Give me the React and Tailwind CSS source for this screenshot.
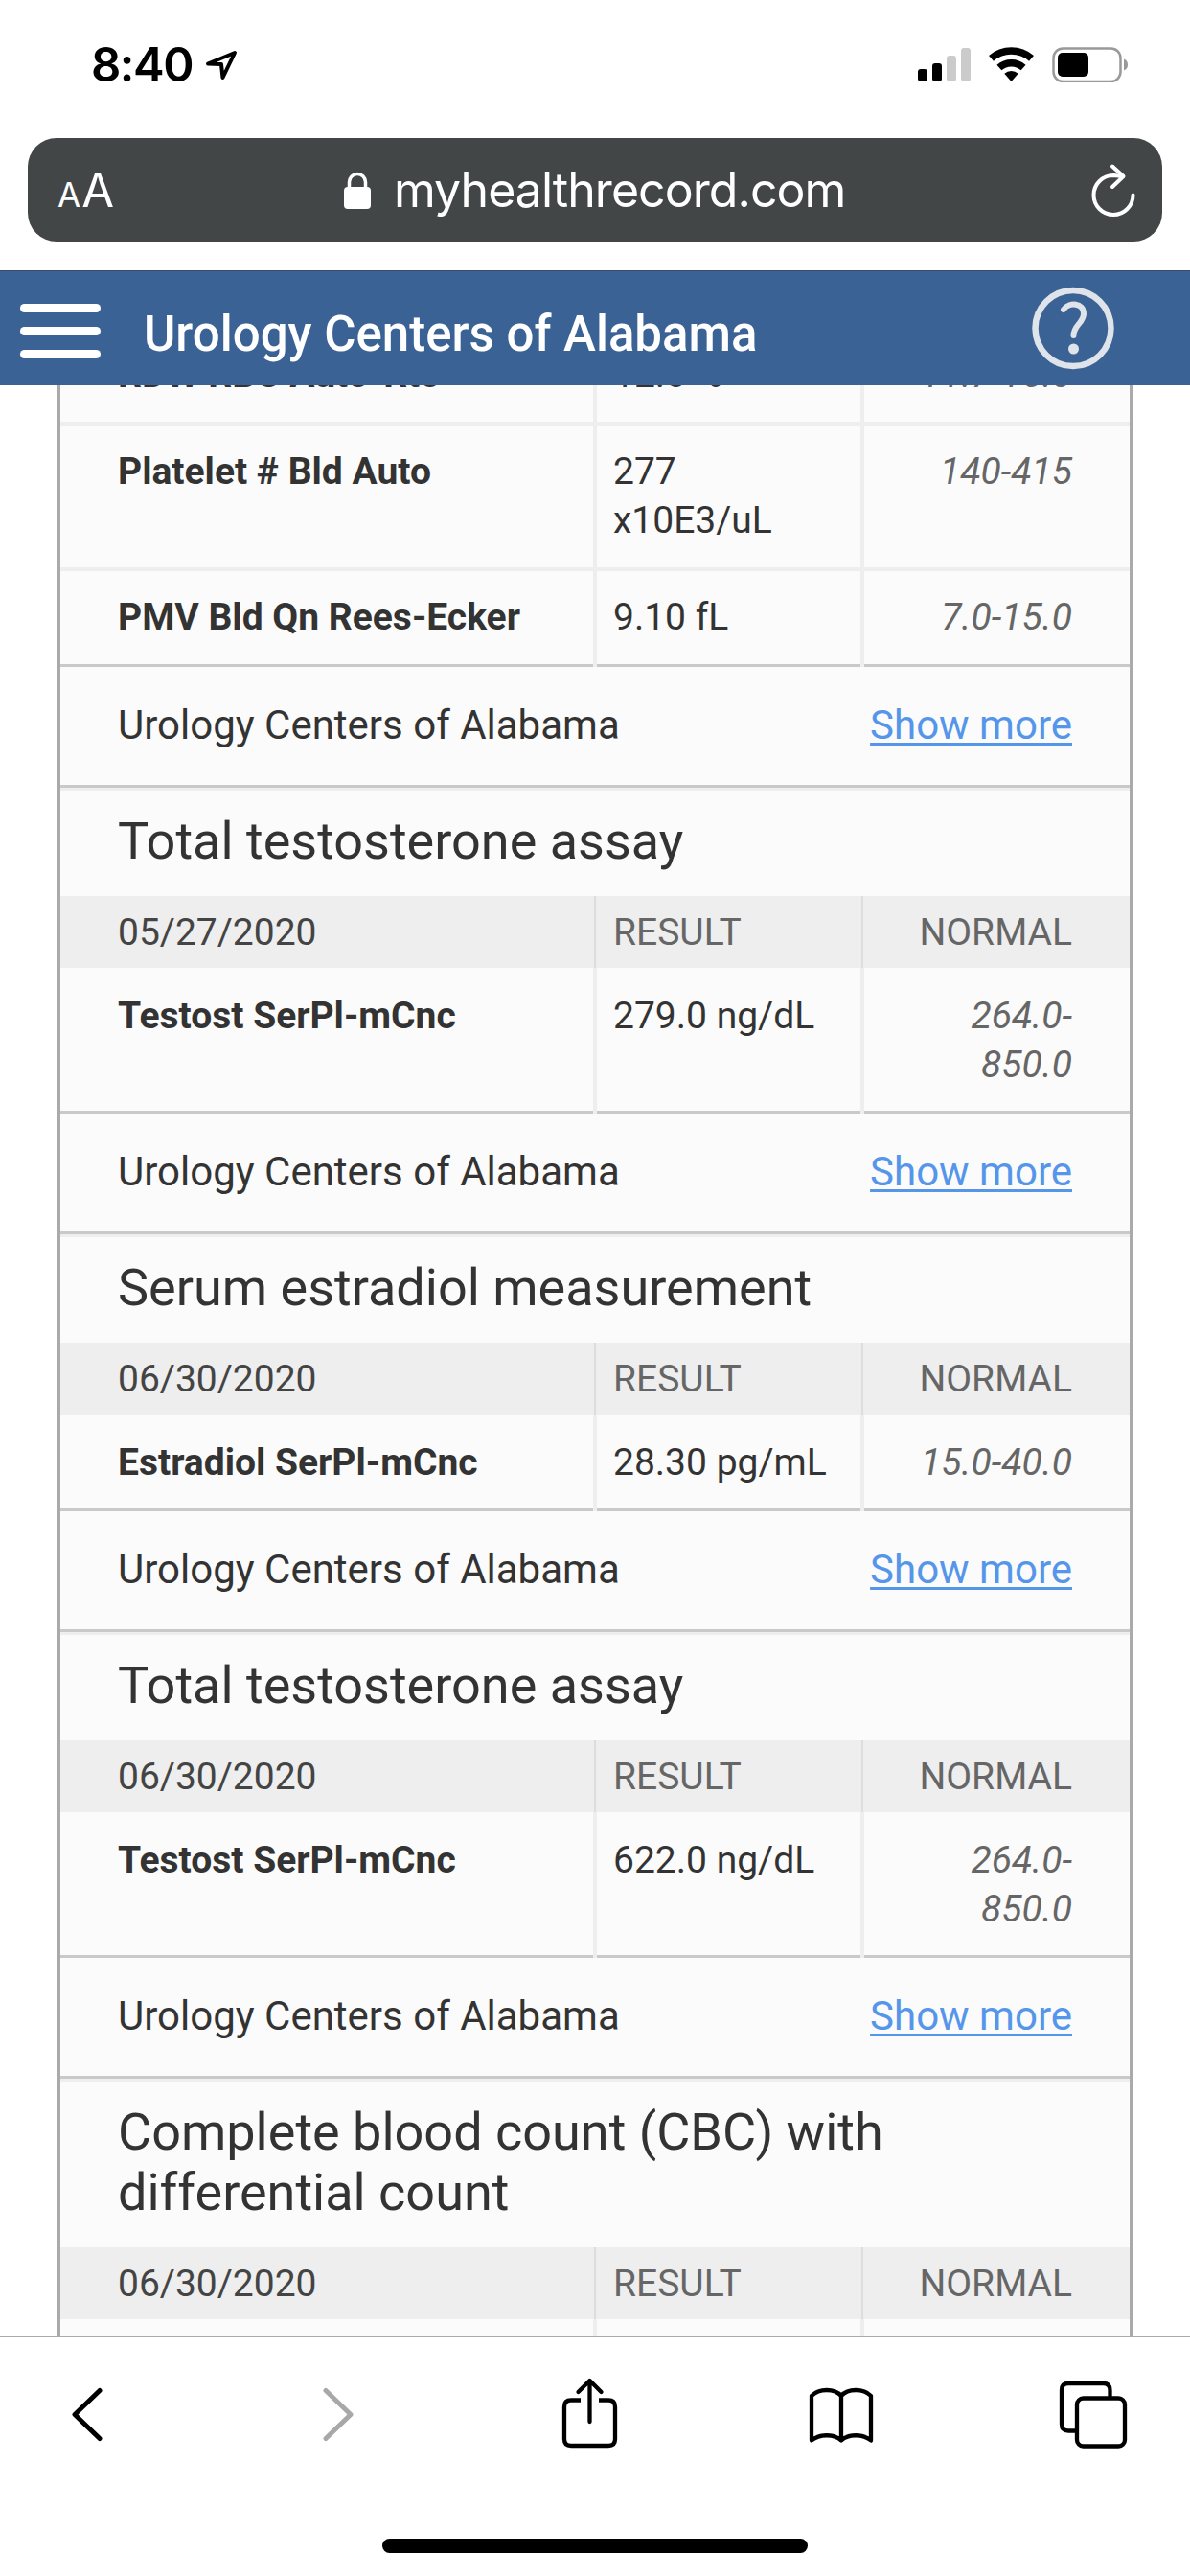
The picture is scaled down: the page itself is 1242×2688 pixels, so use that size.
const clinic = "Urology Centers of Alabama";

const reports = [
  {
    source: clinic,
    rows: [
      { name: "RDW RBC Auto-Rto", result: "12.6 %", normal: "11.7-15.0" },
      { name: "Platelet # Bld Auto", result: "277 x10E3/uL", normal: "140-415" },
      { name: "PMV Bld Qn Rees-Ecker", result: "9.10 fL", normal: "7.0-15.0" },
    ],
  },
  {
    title: "Total testosterone assay",
    date: "05/27/2020",
    source: clinic,
    rows: [
      { name: "Testost SerPl-mCnc", result: "279.0 ng/dL", normal: "264.0-850.0" },
    ],
  },
  {
    title: "Serum estradiol measurement",
    date: "06/30/2020",
    source: clinic,
    rows: [
      { name: "Estradiol SerPl-mCnc", result: "28.30 pg/mL", normal: "15.0-40.0" },
    ],
  },
  {
    title: "Total testosterone assay",
    date: "06/30/2020",
    source: clinic,
    rows: [
      { name: "Testost SerPl-mCnc", result: "622.0 ng/dL", normal: "264.0-850.0" },
    ],
  },
  {
    title: "Complete blood count (CBC) with differential count",
    date: "06/30/2020",
    rows: [{ name: "", result: "", normal: "" }],
  },
];

function StatusBar() {
  return (
    <div className="flex h-[144px] items-start justify-between pt-[37px] pr-[65px] pl-[95px]">
      <div className="flex items-center">
        <span className="w-[119px] text-[49px] leading-[62px] font-semibold tracking-[-1.5px]">
          8:40
        </span>
        <svg
          className="h-[32px] w-[34px]"
          viewBox="0 0 34 32"
          fill="none"
          stroke="black"
          strokeWidth="4"
          strokeLinejoin="round"
        >
          <path d="M31 3 L3 14.500 L17 15 L18.500 29 Z" />
        </svg>
      </div>
      <svg className="mt-[11px] h-[38px] w-[219px]" viewBox="0 0 219 38">
        <rect x="0" y="24" width="10" height="13" rx="3" />
        <rect x="15" y="18" width="10" height="19" rx="3" />
        <rect x="30" y="10" width="10" height="27" rx="3" fill="#cbcbcb" />
        <rect x="45" y="2" width="10" height="35" rx="3" fill="#cbcbcb" />
        <g fill="none" stroke="black" strokeWidth="7.5">
          <path d="M76.500 12.900 A32 32 0 0 1 118.500 12.900" />
          <path d="M84.900 22.500 A19.200 19.200 0 0 1 110.100 22.500" />
        </g>
        <path d="M97.500 37 L90.300 28.700 A11 11 0 0 1 104.700 28.700 Z" />
        <rect
          x="141.5"
          y="2.5"
          width="70"
          height="34.5"
          rx="10"
          fill="none"
          stroke="#999"
          strokeWidth="2.5"
        />
        <rect x="146" y="7" width="32" height="25" rx="5" />
        <path
          d="M215 13.500 Q219 15 219 19.500 Q219 24 215 25.500 Z"
          fill="#999"
        />
      </svg>
    </div>
  );
}

function AddressBar() {
  return (
    <div className="mx-[29px] flex h-[108px] items-center rounded-[30px] bg-[#424647] pr-[28px] pl-[31px] text-white">
      <div className="mt-[5px] flex w-[299px] items-baseline gap-px leading-[60px]">
        <span className="text-[35px]">A</span>
        <span className="text-[49px]">A</span>
      </div>
      <svg className="mr-[24px] h-[39px] w-[28px]" viewBox="0 0 28 39">
        <rect x="0" y="16" width="28" height="23" rx="4" fill="white" />
        <path
          d="M5.500 18 V11 A8.500 8.500 0 0 1 22.500 11 V18"
          fill="none"
          stroke="white"
          strokeWidth="3.5"
        />
      </svg>
      <span className="flex-1 text-[50px] leading-[60px] tracking-[-0.95px] whitespace-nowrap">
        myhealthrecord.com
      </span>
      <svg
        className="h-[56px] w-[46px]"
        viewBox="0 0 46 56"
        fill="none"
        stroke="white"
        strokeWidth="4"
        strokeLinecap="round"
        strokeLinejoin="round"
      >
        <path d="M43.500 33.500 A20.500 20.500 0 1 1 23 13 L33 14" />
        <path d="M22 3.500 L33.500 14 L22 25" />
      </svg>
    </div>
  );
}

function SiteHeader() {
  return (
    <header className="mt-[30px] flex h-[120px] shrink-0 items-center border-t border-[#3c4964] bg-[#3b6295] pr-[78px] pl-[21px] text-white">
      <div className="mt-[6px] flex w-[84px] flex-col gap-[15px]">
        <div className="h-[9px] rounded-full bg-white" />
        <div className="h-[9px] rounded-full bg-white" />
        <div className="h-[9px] rounded-full bg-white" />
      </div>
      <h1 className="mt-[13px] ml-[45px] flex-1 font-[Roboto,sans-serif] text-[51px] leading-[60px] font-medium whitespace-nowrap">
        Urology Centers of Alabama
      </h1>
      <svg
        className="h-[88px] w-[88px]"
        viewBox="0 0 88 88"
        fill="none"
        stroke="#dfe3ea"
        strokeWidth="6.5"
      >
        <circle cx="44" cy="43.5" r="39.5" />
        <path
          d="M34 24 C40 16 55 16.500 55 28.500 C55 38 44.500 40 44.500 51"
          strokeWidth="6"
          strokeLinecap="round"
        />
        <circle cx="44.5" cy="65" r="5.5" fill="#dfe3ea" stroke="none" />
      </svg>
    </header>
  );
}

function ResultRow({ row, underHeading, last }) {
  const pad = underHeading ? "pt-[25px] pb-[22px]" : "pt-[23px] pb-[23px]";
  const line = last
    ? "border-b-[3px] border-[#c9c9c9]"
    : "border-b-4 border-[#eee]";
  return (
    <div className="grid grid-cols-[556px_275px_277px] gap-x-1 bg-[#eee] text-[39px] leading-[51px]">
      <div className={`bg-[#fbfbfb] pl-[60px] font-bold ${pad} ${line}`}>
        {row.name}
      </div>
      <div className={`bg-[#fbfbfb] pr-[30px] pl-[17px] ${pad} ${line}`}>
        {row.result}
      </div>
      <div
        className={`bg-[#fbfbfb] pr-[60px] pl-12 text-right text-[#666] italic ${pad} ${line}`}
      >
        {row.normal}
      </div>
    </div>
  );
}

function Report({ report }) {
  return (
    <section>
      {report.title && (
        <>
          <h2 className="pt-[21px] pr-[180px] pb-[26px] pl-[60px] text-[54px] leading-[63px]">
            {report.title}
          </h2>
          <div className="grid h-[75px] grid-cols-[559px_279px_278px] bg-[#eee] text-[39px] leading-[77px] text-[#666]">
            <div className="h-[75px] border-r-2 border-[#dcdede] pl-[60px] text-[#444]">
              {report.date}
            </div>
            <div className="h-[75px] border-r-2 border-[#dcdede] pl-[18px]">
              RESULT
            </div>
            <div className="h-[75px] pr-[60px] text-right">NORMAL</div>
          </div>
        </>
      )}
      {report.rows.map((row, i) => (
        <ResultRow
          key={row.name}
          row={row}
          underHeading={Boolean(report.title) && i === 0}
          last={i === report.rows.length - 1}
        />
      ))}
      {report.source && (
        <div className="border-b-[3px] border-[#eee]">
          <div className="flex h-[126px] items-center justify-between border-b-[3px] border-[#c9c9c9] pr-[60px] pb-[2px] pl-[60px] text-[42px]">
            <span>{report.source}</span>
            <a className="text-[#5596ea] underline decoration-[3px] underline-offset-[4px]">
              Show more
            </a>
          </div>
        </div>
      )}
    </section>
  );
}

function Toolbar() {
  return (
    <footer className="h-[250px] shrink-0 border-t border-[#aaa] bg-white">
      <div className="flex h-[160px] items-start pt-[41px] pl-[73px]">
        <svg
          className="mt-[10px] h-[60px] w-[36px]"
          viewBox="0 0 36 60"
          fill="none"
          stroke="black"
          strokeWidth="5"
          strokeLinecap="round"
          strokeLinejoin="round"
        >
          <path d="M31 4.500 L5 29.500 L31 54.500" />
        </svg>
        <svg
          className="mt-[10px] ml-[226px] h-[60px] w-[36px]"
          viewBox="0 0 36 60"
          fill="none"
          stroke="#a8a8a8"
          strokeWidth="5"
          strokeLinecap="round"
          strokeLinejoin="round"
        >
          <path d="M5 4.500 L31 29.500 L5 54.500" />
        </svg>
        <svg
          className="ml-[214px] h-[76px] w-[60px]"
          viewBox="0 0 60 76"
          fill="none"
          stroke="black"
          strokeWidth="4.3"
          strokeLinejoin="round"
        >
          <path d="M21 24.500 H11 Q4 24.500 4 31.500 V65 Q4 72 11 72 H50 Q57 72 57 65 V31.500 Q57 24.500 50 24.500 H40" />
          <path
            d="M30.500 47 V5 M18.500 16 L30.500 4 L42.500 16"
            strokeLinecap="round"
          />
        </svg>
        <svg
          className="mt-[10px] ml-[198px] h-[62px] w-[70px]"
          viewBox="0 0 70 62"
          fill="none"
          stroke="black"
          strokeWidth="4.3"
          strokeLinecap="round"
          strokeLinejoin="round"
        >
          <path d="M35 10 C28 2 12 2 4 10 V56.500 C12 49.500 28 49.500 35 56.500 C42 49.500 58 49.500 66 56.500 V10 C58 2 42 2 35 10 V56" />
        </svg>
        <svg
          className="mt-[3px] ml-[191px] h-[74px] w-[74px]"
          viewBox="0 0 74 74"
          fill="none"
          stroke="black"
          strokeWidth="4.3"
        >
          <path d="M19 53.500 H11 Q4 53.500 4 46.500 V11 Q4 4 11 4 H47.500 Q54.500 4 54.500 11 V19" />
          <rect x="20" y="19.5" width="50" height="50" rx="6.5" />
        </svg>
      </div>
      <div className="mx-auto mt-[50px] h-[15px] w-[444px] rounded-full bg-black" />
    </footer>
  );
}

export default function App() {
  return (
    <div className="flex h-[2688px] w-[1242px] flex-col overflow-hidden bg-white font-[Inter,sans-serif] text-black">
      <StatusBar />
      <AddressBar />
      <SiteHeader />
      <main className="flex-1 overflow-hidden font-[Roboto,sans-serif] text-[#333]">
        <div className="mx-[60px] -mt-[59px] border-x-[3px] border-[#aaa] bg-[#fbfbfb]">
          {reports.map((report, i) => (
            <Report key={i} report={report} />
          ))}
        </div>
      </main>
      <Toolbar />
    </div>
  );
}
